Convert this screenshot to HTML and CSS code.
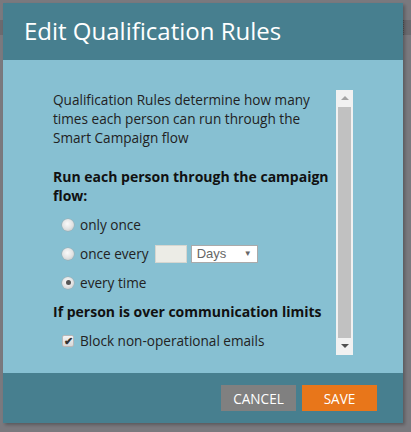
FILE: index.html
```html
<!DOCTYPE html>
<html>
<head>
<meta charset="utf-8">
<link rel="stylesheet" href="styles.css">
</head>
<body>
<div class="backdrop">
  <div class="bg-bar bg-left"></div>
  <div class="bg-bar bg-right"></div>
  <div class="dialog">
    <div class="dlg-header">Edit Qualification Rules</div>
    <div class="dlg-body">
      <div class="scroller">
        <div class="content">
          <p class="intro">Qualification Rules determine how many times each person can run through the Smart Campaign flow</p>
          <p class="label">Run each person through the campaign flow:</p>
          <div class="option"><span class="radio"></span><span>only once</span></div>
          <div class="option"><span class="radio"></span><span>once every</span><span class="num-input"></span><span class="select">Days<span class="caret">▼</span></span></div>
          <div class="option"><span class="radio checked"></span><span>every time</span></div>
          <p class="label label2">If person is over communication limits</p>
          <div class="option"><span class="checkbox">✔</span><span>Block non-operational emails</span></div>
        </div>
        <div class="scrollbar">
          <div class="sb-arrow up"></div>
          <div class="sb-thumb"></div>
          <div class="sb-arrow down"></div>
        </div>
      </div>
    </div>
    <div class="dlg-footer">
      <button class="btn btn-cancel">CANCEL</button>
      <button class="btn btn-save">SAVE</button>
    </div>
  </div>
</div>
</body>
</html>
```
FILE: styles.css
```css
* { box-sizing: border-box; }
html, body { margin: 0; padding: 0; }
body {
  background: #7a797e;
  font-family: "Open Sans", "Liberation Sans", sans-serif;
  width: 411px;
  height: 432px;
  overflow: hidden;
}
.backdrop {
  position: relative;
  padding: 3px;
  height: 432px;
}
.bg-bar {
  position: absolute;
  top: 20px;
  height: 15px;
  background: #6b6a6f;
}
.bg-left { left: 0; width: 3px; }
.bg-right { left: 403px; width: 8px; border-left: 1px dotted #555; }
.dialog {
  position: relative;
  width: 400px;
  height: 420px;
  display: flex;
  flex-direction: column;
  box-shadow: 2px 2px 3px rgba(0,0,0,0.25);
}
.dlg-header {
  height: 57px;
  background: #477f8f;
  color: #fff;
  font-size: 24px;
  padding: 13px 0 0 21px;
  line-height: 30px;
}
.dlg-body {
  flex: 1;
  background: #87c0d2;
  padding: 30px 50px 0 50px;
}
.scroller {
  display: flex;
  height: 265px;
}
.content {
  flex: 1;
  color: #222;
  font-size: 13.6px;
  line-height: 19px;
  padding-right: 2px;
}
.content p { margin: 0; }
.intro { margin-bottom: 20px !important; }
.label { font-weight: bold; color: #111; font-size: 14px; }
.label2 { margin-top: 5px !important; }
.option {
  display: flex;
  align-items: center;
  height: 29px;
  padding-left: 9px;
}
.label + .option { margin-top: 5px; }
.radio {
  width: 12px;
  height: 12px;
  border-radius: 50%;
  background: radial-gradient(circle at 45% 40%, #fafafa 0%, #e2e2e2 55%, #b9b9b9 100%);
  box-shadow: 0 0 0 0.5px #a9a9a9;
  margin-right: 6px;
  position: relative;
}
.radio.checked::after {
  content: "";
  position: absolute;
  left: 3.5px;
  top: 3.5px;
  width: 5px;
  height: 5px;
  border-radius: 50%;
  background: #555;
}
.num-input {
  width: 32px;
  height: 18px;
  background: #ecece6;
  border: 1px solid #d6d6d0;
  margin-left: 6px;
}
.select {
  width: 67px;
  height: 18px;
  background: #fff;
  border: 1px solid #aaa;
  margin-left: 4px;
  font-family: "Liberation Sans", Arial, sans-serif;
  font-size: 13px;
  line-height: 16px;
  color: #666;
  padding-left: 5px;
  display: flex;
  justify-content: space-between;
  align-items: center;
}
.caret { font-size: 8px; color: #666; padding-right: 5px; }
.checkbox {
  width: 12px;
  height: 12px;
  background: linear-gradient(#f4f4f4, #d8d8d8);
  border: 1px solid #b8b8b8;
  border-radius: 2px;
  margin-right: 6px;
  font-size: 11px;
  line-height: 10px;
  font-weight: bold;
  color: #333;
  text-align: center;
}
.scrollbar {
  width: 17px;
  background: #f1f1f1;
  display: flex;
  flex-direction: column;
  align-items: center;
}
.sb-arrow { width: 17px; height: 17px; position: relative; }
.sb-arrow.up::after {
  content: "";
  position: absolute;
  left: 4.5px; top: 6px;
  border-left: 4px solid transparent;
  border-right: 4px solid transparent;
  border-bottom: 4px solid #a3a3a3;
}
.sb-arrow.down::after {
  content: "";
  position: absolute;
  left: 4.5px; top: 6px;
  border-left: 4px solid transparent;
  border-right: 4px solid transparent;
  border-top: 4px solid #505050;
}
.sb-thumb {
  flex: 1;
  width: 13px;
  background: #c1c1c1;
}
.dlg-footer {
  height: 50px;
  background: #477f8f;
  display: flex;
  justify-content: flex-end;
  align-items: flex-start;
  padding: 12px 26px 0 0;
  gap: 6px;
}
.btn {
  width: 75px;
  height: 26px;
  border: none;
  color: #fff;
  font-family: "Open Sans", "Liberation Sans", sans-serif;
  font-size: 13.6px;
  padding: 0;
}
.btn-cancel { background: #808080; }
.btn-save { background: #e8761a; }
```
